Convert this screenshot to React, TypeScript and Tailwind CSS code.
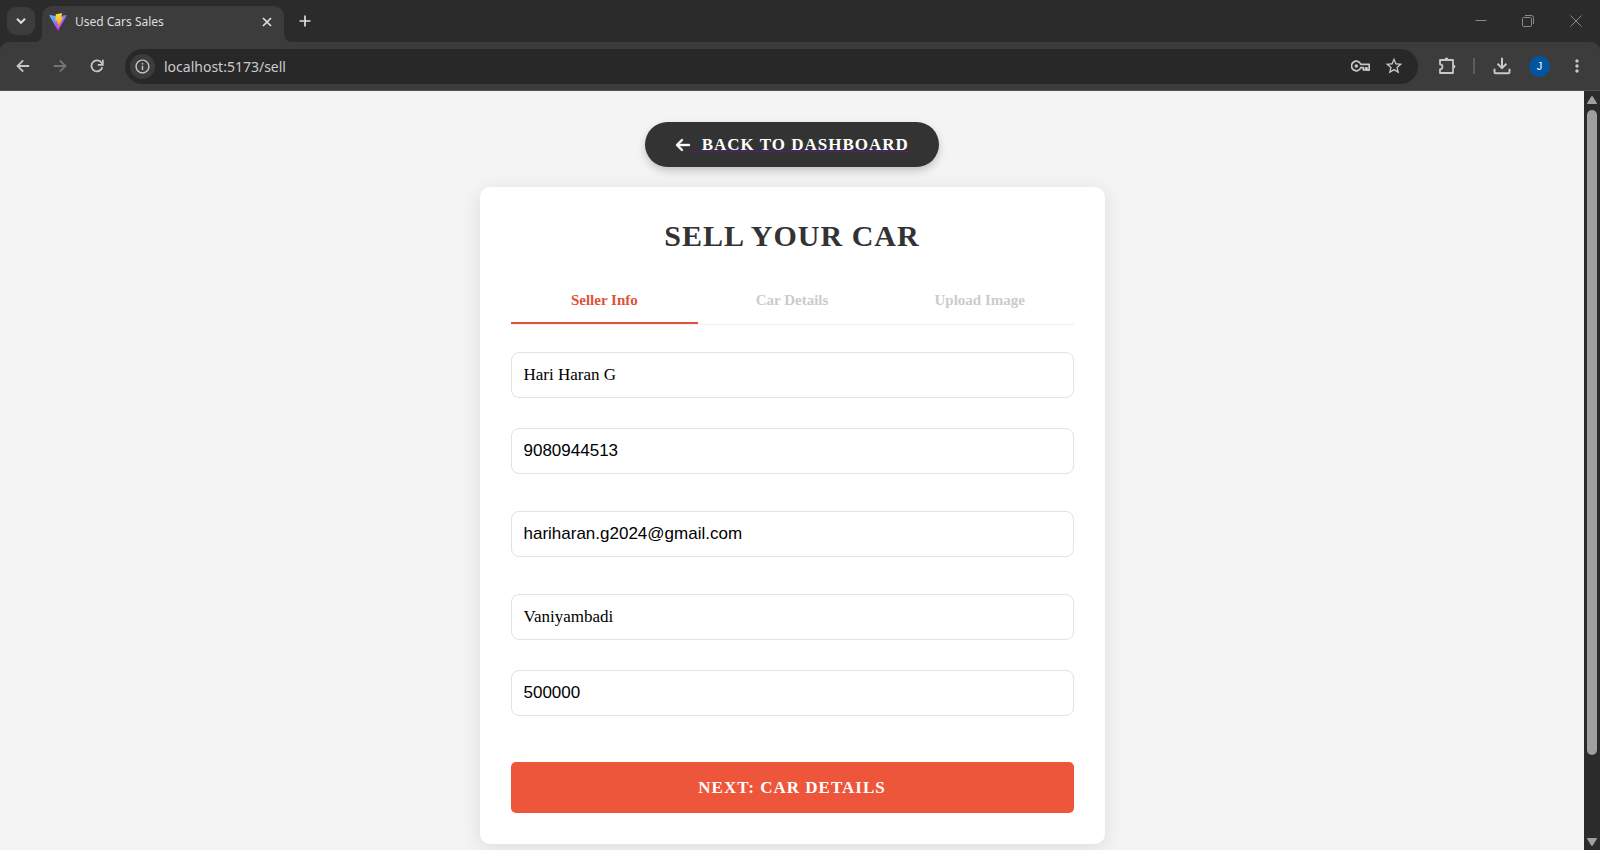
import { useState } from "react";
import type { ReactNode } from "react";
import { FaArrowLeft } from "react-icons/fa6";
import { MdInfoOutline, MdStarOutline, MdMoreVert } from "react-icons/md";

function ViteLogo() {
  return (
    <svg viewBox="0 0 410 404" className="size-[18px]" aria-hidden="true">
      <defs>
        <linearGradient id="vite-a" x1="6" y1="33" x2="235" y2="344" gradientUnits="userSpaceOnUse">
          <stop stopColor="#41D1FF" />
          <stop offset="1" stopColor="#BD34FE" />
        </linearGradient>
        <linearGradient id="vite-b" x1="194.65" y1="8.82" x2="236.08" y2="292.99" gradientUnits="userSpaceOnUse">
          <stop stopColor="#FFEA83" />
          <stop offset=".083" stopColor="#FFDD35" />
          <stop offset="1" stopColor="#FFA800" />
        </linearGradient>
      </defs>
      <path
        fill="url(#vite-a)"
        d="M399.641 59.525 215.643 388.545c-3.799 6.793-13.559 6.833-17.415.073L10.582 59.556C6.38 52.19 12.68 43.267 21.028 44.759l184.195 32.923c1.175.21 2.378.208 3.553-.006l180.343-32.87c8.32-1.517 14.649 7.337 10.522 14.719Z"
      />
      <path
        fill="url(#vite-b)"
        d="M292.965 1.574 156.801 28.255a5 5 0 0 0-4.03 4.611l-8.376 141.464c-.197 3.332 2.863 5.918 6.115 5.168l37.91-8.749c3.547-.818 6.752 2.306 6.023 5.873l-11.263 55.153c-.758 3.712 2.727 6.886 6.352 5.785l23.415-7.114c3.63-1.102 7.118 2.081 6.35 5.796l-17.899 86.633c-1.12 5.419 6.088 8.374 9.094 3.728l2.008-3.103 110.954-221.428c1.858-3.707-1.346-7.935-5.418-7.149l-39.022 7.531c-3.667.707-6.787-2.708-5.752-6.296l25.469-88.291c1.036-3.594-2.095-7.012-5.766-6.293Z"
      />
    </svg>
  );
}

function IconButton({ label, className = "", children }: { label: string; className?: string; children: ReactNode }) {
  return (
    <button type="button" aria-label={label} className={`flex shrink-0 items-center justify-center ${className}`}>
      {children}
    </button>
  );
}

function TabStrip() {
  return (
    <div className="flex h-[42px] items-start bg-[#2b2b2b] pl-[7px]">
      <IconButton label="Search tabs" className="mt-[7px] size-[28px] rounded-[9px] bg-[#3c3c3c] text-[#dedede]">
        <svg viewBox="0 0 10 6" className="h-[6px] w-[10px]" fill="none" stroke="currentColor" strokeWidth="2">
          <path d="M1 .8 5 4.8 9 .8" />
        </svg>
      </IconButton>
      <div className="flex items-end self-end">
        <svg viewBox="0 0 7 7" className="size-[7px]" aria-hidden="true">
          <path d="M7 0v7H0a7 7 0 0 0 7-7Z" fill="#3c3c3c" />
        </svg>
        <div className="flex h-[36px] w-[242px] items-center rounded-t-[10px] bg-[#3c3c3c] pr-[9px] pb-[5px] pl-[7px] text-[#dedede]">
          <ViteLogo />
          <span className="ml-[8px] flex-1 text-[12px] leading-[18px]">Used Cars Sales</span>
          <IconButton label="Close tab" className="size-[16px]">
            <svg viewBox="0 0 10 10" className="size-[10px]" stroke="currentColor" strokeWidth="1.7">
              <path d="m1 1 8 8M9 1 1 9" />
            </svg>
          </IconButton>
        </div>
        <svg viewBox="0 0 8 8" className="size-[8px]" aria-hidden="true">
          <path d="M0 0v8h8a8 8 0 0 1-8-8Z" fill="#3c3c3c" />
        </svg>
      </div>
      <IconButton label="New tab" className="mt-[12px] ml-[4px] size-[18px] text-[#dedede]">
        <svg viewBox="0 0 12 12" className="size-[12px]" stroke="currentColor" strokeWidth="1.7">
          <path d="M6 .5v11M.5 6h11" />
        </svg>
      </IconButton>
      <div className="ml-auto flex h-[41px] items-center text-[#8a8a8a]">
        <IconButton label="Minimize" className="h-full w-[46px]">
          <svg viewBox="0 0 12 12" className="size-[12px]" stroke="currentColor">
            <path d="M.5 5.5h11" />
          </svg>
        </IconButton>
        <IconButton label="Restore" className="h-full w-[48px]">
          <svg viewBox="0 0 12 12" className="size-[12px]" fill="none" stroke="currentColor">
            <rect x=".5" y="2.5" width="9" height="9" rx="1" />
            <path d="M3 .5h6.5a2 2 0 0 1 2 2V9" />
          </svg>
        </IconButton>
        <IconButton label="Close" className="h-full w-[48px]">
          <svg viewBox="0 0 12 12" className="size-[12px]" stroke="currentColor">
            <path d="m.5.5 11 11M11.5.5l-11 11" />
          </svg>
        </IconButton>
      </div>
    </div>
  );
}

function Toolbar() {
  const [url, setUrl] = useState("localhost:5173/sell");
  return (
    <div className="bg-[#2b2b2b]">
      <div className="flex h-[49px] items-center rounded-t-[9px] border-b border-[#525252] bg-[#3c3c3c] pr-[13px] pl-[13px] text-[#c7c7c7]">
        <IconButton label="Back" className="size-[20px]">
          <svg viewBox="0 0 14 14" className="size-[14px]" fill="none" stroke="currentColor" strokeWidth="1.8">
            <path d="M13.2 7H2M7.2 1.3 1.5 7l5.700 5.700" />
          </svg>
        </IconButton>
        <IconButton label="Forward" className="ml-[17px] size-[20px] text-[#757575]">
          <svg viewBox="0 0 14 14" className="size-[14px]" fill="none" stroke="currentColor" strokeWidth="1.8">
            <path d="M.8 7H12M6.800 1.3 12.500 7l-5.700 5.700" />
          </svg>
        </IconButton>
        <IconButton label="Reload" className="ml-[17px] size-[20px]">
          <svg viewBox="0 0 14 14" className="size-[14px]" fill="none" stroke="currentColor" strokeWidth="1.8">
            <path d="M12.300 8.200A5.500 5.500 0 1 1 11.500 3.800L12.500 5" />
            <path d="M12.800.8v5H7.800" />
          </svg>
        </IconButton>
        <div className="ml-[18px] flex h-[35px] flex-1 items-center rounded-full bg-[#282828] pr-[14px] pl-[5px]">
          <IconButton label="Site information" className="size-[25px] rounded-full bg-[#3c3c3c]">
            <MdInfoOutline className="size-[17px]" />
          </IconButton>
          <input
            aria-label="Address"
            value={url}
            onChange={(e) => setUrl(e.target.value)}
            className="ml-[9px] h-[24px] flex-1 bg-transparent text-[14px] text-[#cccccc] outline-none"
          />
          <IconButton label="Passwords" className="size-[20px]">
            <svg viewBox="0 0 20 12" className="h-[12px] w-[19px]" fill="none" stroke="currentColor" strokeWidth="1.8">
              <path strokeLinejoin="round" d="M10.2 4.2A5 5 0 1 0 10.2 7.8H13v2.4h2.4V8h1.4v2.4h2.3V4.2Z" />
              <circle cx="5.6" cy="6" r="1.9" fill="currentColor" stroke="none" />
            </svg>
          </IconButton>
          <IconButton label="Bookmark" className="ml-[14px] size-[20px]">
            <MdStarOutline className="size-[20px]" />
          </IconButton>
        </div>
        <IconButton label="Extensions" className="ml-[19px] size-[20px]">
          <svg viewBox="0 0 18 18" className="size-[18px]" fill="none" stroke="currentColor" strokeWidth="1.8" strokeLinejoin="round">
            <path d="M2 3h13v13H2v-3.7a2.4 2.4 0 0 0 0-5Z" />
            <path d="M6.5 2.6a2 2 0 0 1 4 0ZM15.4 7.6a2 2 0 0 1 0 4Z" fill="currentColor" stroke="none" />
          </svg>
        </IconButton>
        <span className="ml-[16px] h-[16px] w-[2px] bg-[#5c5c5c]" />
        <IconButton label="Downloads" className="ml-[17px] size-[20px]">
          <svg viewBox="0 0 18 18" className="size-[18px]" fill="none" stroke="currentColor" strokeWidth="2">
            <path d="M9 .8v10.4M4.6 6.8 9 11.2l4.4-4.4M1.5 11.8v3.4a1 1 0 0 0 1 1h13a1 1 0 0 0 1-1v-3.4" />
          </svg>
        </IconButton>
        <IconButton label="Profile" className="ml-[17px] size-[21px] rounded-full bg-[#0055a0] font-['Liberation_Sans',sans-serif] text-[11px] text-white">
          J
        </IconButton>
        <IconButton label="Menu" className="ml-[17px] size-[20px]">
          <MdMoreVert className="size-[20px]" />
        </IconButton>
      </div>
    </div>
  );
}

function PageScrollbar() {
  return (
    <div aria-hidden="true" className="flex w-[16px] shrink-0 flex-col items-center bg-[#2b2b2b] pt-[5px] pb-[4px]">
      <svg viewBox="0 0 10 8" className="h-[8px] w-[10px]" fill="#9f9f9f">
        <path d="M4 .8a1.2 1.2 0 0 1 2 0L9.8 7a.6.6 0 0 1-.6 1H.8a.6.6 0 0 1-.6-1Z" />
      </svg>
      <div className="flex w-full flex-1 flex-col items-center pt-[6px] pb-[83px]">
        <div className="w-[10px] flex-1 rounded-full bg-[#9f9f9f]" />
      </div>
      <svg viewBox="0 0 10 8" className="h-[8px] w-[10px]" fill="#9f9f9f">
        <path d="M4 7.2a1.2 1.2 0 0 0 2 0L9.8 1a.6.6 0 0 0-.6-1H.8a.6.6 0 0 0-.6 1Z" />
      </svg>
    </div>
  );
}

const steps = ["Seller Info", "Car Details", "Upload Image"];

const fields = [
  { name: "name", label: "Name", type: "text", value: "Hari Haran G", style: "font-['Liberation_Serif',serif]" },
  { name: "phone", label: "Phone", type: "tel", value: "9080944513", style: "mt-[30px] font-['Liberation_Sans',sans-serif]" },
  { name: "email", label: "Email", type: "email", value: "hariharan.g2024@gmail.com", style: "mt-[37px] font-['Liberation_Sans',sans-serif]" },
  { name: "city", label: "City", type: "text", value: "Vaniyambadi", style: "mt-[37px] font-['Liberation_Serif',serif]" },
  { name: "price", label: "Price", type: "text", value: "500000", style: "mt-[30px] font-['Liberation_Sans',sans-serif]" },
];

function SellForm() {
  const [active, setActive] = useState(0);
  return (
    <form
      onSubmit={(e) => e.preventDefault()}
      className="w-full max-w-[625px] rounded-[10px] bg-white p-[31px] shadow-[0_4px_20px_rgba(0,0,0,0.1)]"
    >
      <h1 className="text-center text-[30px] leading-[36px] font-bold tracking-[1px] text-[#333333]">SELL YOUR CAR</h1>
      <div role="tablist" className="mt-[20px] flex border-b border-[#eeeeee]">
        {steps.map((step, i) => (
          <button
            key={step}
            type="button"
            role="tab"
            aria-selected={i === active}
            onClick={() => setActive(i)}
            className={`h-[50px] flex-1 border-b-2 pt-[4px] text-[15px] font-bold ${
              i === active ? "border-[#e0523a] text-[#e0523a]" : "border-transparent text-[#cccccc]"
            }`}
          >
            {step}
          </button>
        ))}
      </div>
      <div className="mt-[27px] flex flex-col">
        {fields.map((f) => (
          <input
            key={f.name}
            aria-label={f.label}
            type={f.type}
            name={f.name}
            defaultValue={f.value}
            className={`h-[46px] w-full rounded-[8px] border border-[#e2e2e2] bg-white px-[12px] text-[17px] text-black outline-none ${f.style}`}
          />
        ))}
      </div>
      <button
        type="submit"
        className="mt-[46px] h-[51px] w-full rounded-[5px] bg-[#ee563b] text-[17px] font-bold tracking-[1px] text-white"
      >
        NEXT: CAR DETAILS
      </button>
    </form>
  );
}

export default function App() {
  return (
    <div className="flex h-screen flex-col overflow-hidden font-['Noto_Sans',sans-serif]">
      <TabStrip />
      <Toolbar />
      <div className="flex min-h-0 flex-1">
        <main className="flex flex-1 flex-col items-center overflow-hidden bg-[#f4f4f4] pt-[31px] font-['Liberation_Serif',serif]">
          <a
            href="#dashboard"
            className="mb-[20px] flex h-[45px] shrink-0 items-center rounded-full bg-[#333333] px-[30px] text-[17px] font-bold tracking-[1px] text-white shadow-[0_4px_8px_rgba(0,0,0,0.2)]"
          >
            <FaArrowLeft className="size-[16px]" stroke="currentColor" strokeWidth={12} />
            <span className="underline decoration-[#551a8b]">&nbsp;&nbsp;BACK TO DASHBOARD</span>
          </a>
          <SellForm />
        </main>
        <PageScrollbar />
      </div>
    </div>
  );
}
